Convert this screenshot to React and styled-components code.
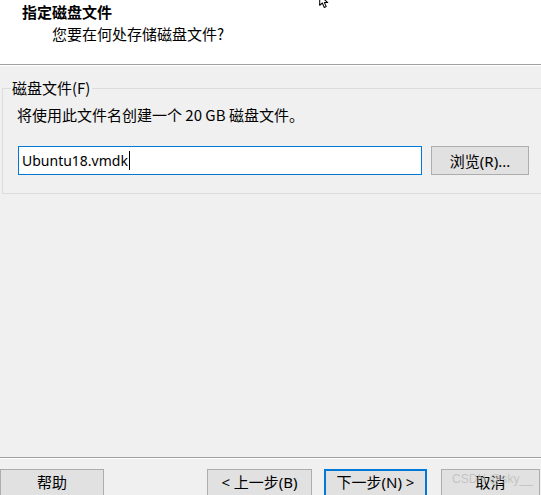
import React from "react";
import styled, { createGlobalStyle } from "styled-components";

const GlobalStyle = createGlobalStyle`
  html, body {
    margin: 0;
    padding: 0;
    background: #f0f0f0;
  }
  body {
    font-family: "Noto Sans", "Noto Sans CJK SC", sans-serif;
    color: #000;
  }
`;

const buttons = [
  { label: "< 上一步(B)", width: 105 },
  { label: "下一步(N) >", width: 103, primary: true },
  { label: "取消", width: 99 },
];

const App = () => {
  return (
    <>
      <GlobalStyle />
      <Wizard>
        <Header>
          <Title>指定磁盘文件</Title>
          <Subtitle>您要在何处存储磁盘文件?</Subtitle>
          <Pointer width="16" height="16" viewBox="0 0 14 14">
            <path
              d="M1.5 0.5 L1.5 9 L3.8 7 L5.5 11 L7.2 10.2 L5.6 6.6 L8.6 6.6 Z"
              fill="#fff"
              stroke="#000"
              strokeWidth="0.9"
              strokeLinejoin="round"
            />
          </Pointer>
        </Header>

        <Content>
          <Group>
            <Legend>磁盘文件(F)</Legend>
            <Hint>将使用此文件名创建一个 20 GB 磁盘文件。</Hint>
            <FileRow>
              <FileInput>
                Ubuntu18.vmdk<Caret />
              </FileInput>
              <Button $width={98}>浏览(R)...</Button>
            </FileRow>
          </Group>
        </Content>

        <Footer>
          <FooterButton $width={104}>帮助</FooterButton>
          <Spacer />
          {buttons.map((b) => (
            <FooterButton key={b.label} $width={b.width} $primary={b.primary}>
              {b.label}
            </FooterButton>
          ))}
          <Watermark>CSDN @sky__</Watermark>
        </Footer>
      </Wizard>
    </>
  );
};

export default App;

const Wizard = styled.div`
  width: 541px;
  height: 495px;
  display: flex;
  flex-direction: column;
  overflow: hidden;
  background: #f0f0f0;
`;

const Header = styled.div`
  position: relative;
  height: 65px;
  flex-shrink: 0;
  background: #fff;
  border-bottom: 1px solid #a0a0a0;
  box-sizing: border-box;
  padding: 2px 0 0 22px;
`;

const Title = styled.div`
  font-family: "Noto Sans CJK SC", sans-serif;
  font-size: 15px;
  font-weight: 700;
  line-height: 20px;
`;

const Subtitle = styled.div`
  font-family: "Noto Sans CJK SC", sans-serif;
  font-size: 15px;
  line-height: 20px;
  margin: 2px 0 0 30px;
`;

const Pointer = styled.svg`
  position: absolute;
  left: 318px;
  top: -5px;
`;

const Content = styled.div`
  flex: 1;
  border-top: 1px solid #fff;
  padding: 12px 0 0 2px;
`;

const Group = styled.fieldset`
  margin: 0 -10px 0 0;
  padding: 7px 14px 18px 15px;
  border: 1px solid #dcdcdc;
  min-width: 0;
`;

const Legend = styled.legend`
  font-family: "Noto Sans CJK SC", sans-serif;
  font-size: 15px;
  line-height: 20px;
  padding: 0 2px 0 1px;
  margin-left: -7px;
  color: #000;
`;

const Hint = styled.div`
  font-family: "Noto Sans CJK SC", sans-serif;
  font-size: 15px;
  line-height: 20px;
  margin-left: -1px;
`;

const FileRow = styled.div`
  display: flex;
  align-items: center;
  margin-top: 21px;
  gap: 9px;
`;

const FileInput = styled.div`
  width: 404px;
  height: 29px;
  box-sizing: border-box;
  border: 1px solid #0078d7;
  background: #fff;
  padding: 0 0 0 3px;
  display: flex;
  align-items: center;
  font-family: "Noto Sans", sans-serif;
  font-size: 14px;
`;

const Caret = styled.span`
  display: inline-block;
  width: 1px;
  height: 19px;
  background: #000;
  margin-left: 1px;
`;

const Button = styled.div`
  width: ${(p) => p.$width}px;
  height: 29px;
  box-sizing: border-box;
  flex-shrink: 0;
  background: #e1e1e1;
  border: ${(p) => (p.$primary ? "2px solid #0078d7" : "1px solid #adadad")};
  display: flex;
  align-items: center;
  justify-content: center;
  font-family: "Noto Sans", "Noto Sans CJK SC", sans-serif;
  font-size: 15px;
  line-height: 20px;
  color: #000;
`;

const FooterButton = styled(Button)`
  align-items: flex-start;
  padding-top: ${(p) => (p.$primary ? 1 : 2)}px;
`;

const Footer = styled.div`
  position: relative;
  height: 38px;
  flex-shrink: 0;
  border-top: 1px solid #a0a0a0;
  box-shadow: inset 0 1px 0 #fff;
  display: flex;
  align-items: flex-start;
  gap: 12px;
  padding: 11px 1px 0 0;
  box-sizing: border-box;

  & > ${FooterButton}:last-of-type {
    margin-left: 2px;
  }
`;

const Spacer = styled.div`
  flex: 1;
`;

const Watermark = styled.span`
  position: absolute;
  left: 452px;
  top: 14px;
  font-family: "Liberation Sans", sans-serif;
  font-size: 12px;
  color: rgba(190, 190, 190, 0.85);
  pointer-events: none;
`;
